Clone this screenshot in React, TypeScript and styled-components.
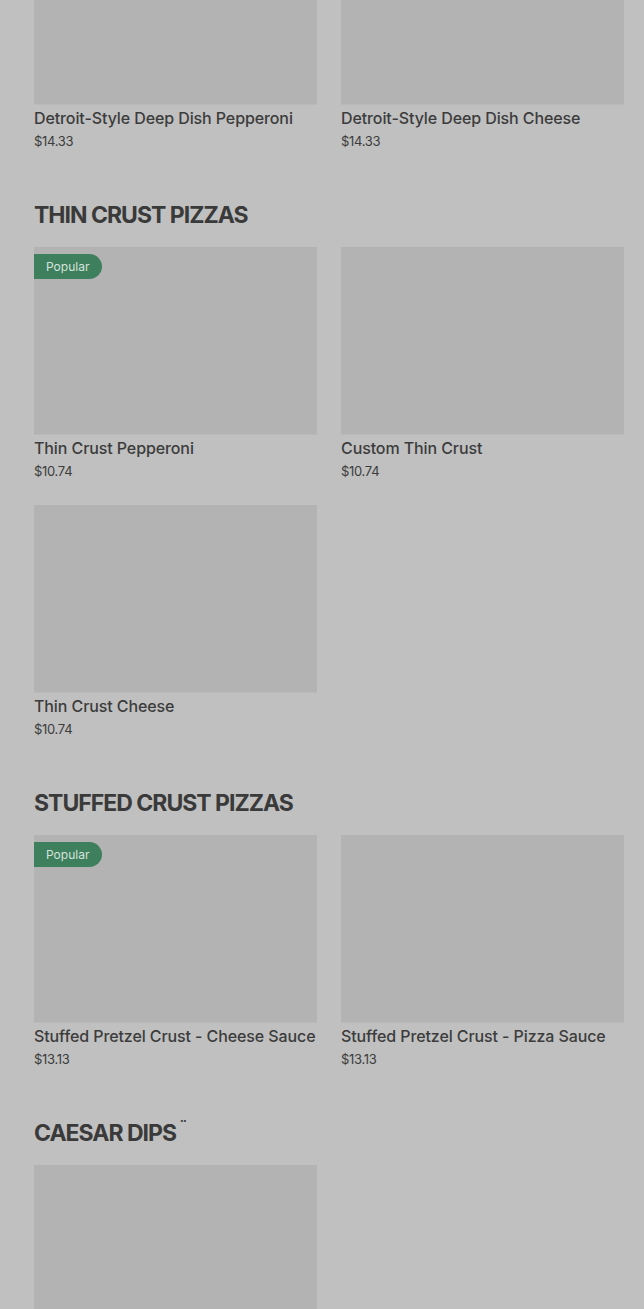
import React from 'react';
import styled, { createGlobalStyle } from 'styled-components';

const GlobalStyle = createGlobalStyle`
  html, body {
    margin: 0;
    padding: 0;
    background: #c0c0c0;
  }
  body {
    font-family: Inter, "Noto Sans", "Liberation Sans", sans-serif;
    color: #3b3b3b;
  }
`;

const Page = styled.div`
  padding: 0 20px 0 34px;
  margin-top: -83px;
  overflow: hidden;
`;

const Section = styled.section`
  margin-bottom: 50px;
`;

const SectionTitle = styled.h2`
  margin: 0 0 17px 0;
  font-size: 23px;
  line-height: 30px;
  font-weight: 700;
  letter-spacing: -1px;
  color: #3a3a3a;
  text-transform: uppercase;
`;

const Mark = styled.sup`
  font-size: 14px;
  font-weight: 700;
  margin-left: 3px;
  vertical-align: 10px;
  line-height: 0;
`;

const Grid = styled.div`
  display: grid;
  grid-template-columns: 283px 283px;
  column-gap: 24px;
  row-gap: 25px;
`;

const Card = styled.div`
  display: flex;
  flex-direction: column;
`;

const ImageBox = styled.div`
  position: relative;
  height: 188px;
  background: #b3b3b3;
  border-bottom: 1px solid #bababa;
  box-sizing: border-box;
`;

const Badge = styled.span`
  position: absolute;
  top: 7px;
  left: 0;
  height: 25px;
  padding: 0 13px 0 12px;
  display: flex;
  align-items: center;
  background: #3e7f5e;
  color: #d6e3dc;
  font-size: 12px;
  border-radius: 0 13px 13px 0;
`;

const Name = styled.div`
  margin-top: 3px;
  font-size: 16px;
  line-height: 20px;
  font-weight: 500;
  letter-spacing: -0.1px;
  color: #3c3c3c;
  white-space: nowrap;
`;

const Price = styled.div`
  margin-top: 4px;
  font-size: 13px;
  line-height: 18px;
  color: #3c3c3c;
  letter-spacing: -0.3px;
`;

type Item = { name?: string; price?: string; popular?: boolean };

const sections: { title?: string; mark?: boolean; items: Item[] }[] = [
  {
    items: [
      { name: 'Detroit-Style Deep Dish Pepperoni', price: '$14.33' },
      { name: 'Detroit-Style Deep Dish Cheese', price: '$14.33' },
    ],
  },
  {
    title: 'Thin Crust Pizzas',
    items: [
      { name: 'Thin Crust Pepperoni', price: '$10.74', popular: true },
      { name: 'Custom Thin Crust', price: '$10.74' },
      { name: 'Thin Crust Cheese', price: '$10.74' },
    ],
  },
  {
    title: 'Stuffed Crust Pizzas',
    items: [
      { name: 'Stuffed Pretzel Crust - Cheese Sauce', price: '$13.13', popular: true },
      { name: 'Stuffed Pretzel Crust - Pizza Sauce', price: '$13.13' },
    ],
  },
  {
    title: 'Caesar Dips',
    mark: true,
    items: [{}],
  },
];

const App: React.FC = () => {
  return (
    <>
      <GlobalStyle />
      <Page>
        {sections.map((section, i) => (
          <Section key={i}>
            {section.title && (
              <SectionTitle>
                {section.title}
                {section.mark && <Mark>¨</Mark>}
              </SectionTitle>
            )}
            <Grid>
              {section.items.map((item, j) => (
                <Card key={j}>
                  <ImageBox>{item.popular && <Badge>Popular</Badge>}</ImageBox>
                  {item.name && <Name>{item.name}</Name>}
                  {item.price && <Price>{item.price}</Price>}
                </Card>
              ))}
            </Grid>
          </Section>
        ))}
      </Page>
    </>
  );
};

export default App;
